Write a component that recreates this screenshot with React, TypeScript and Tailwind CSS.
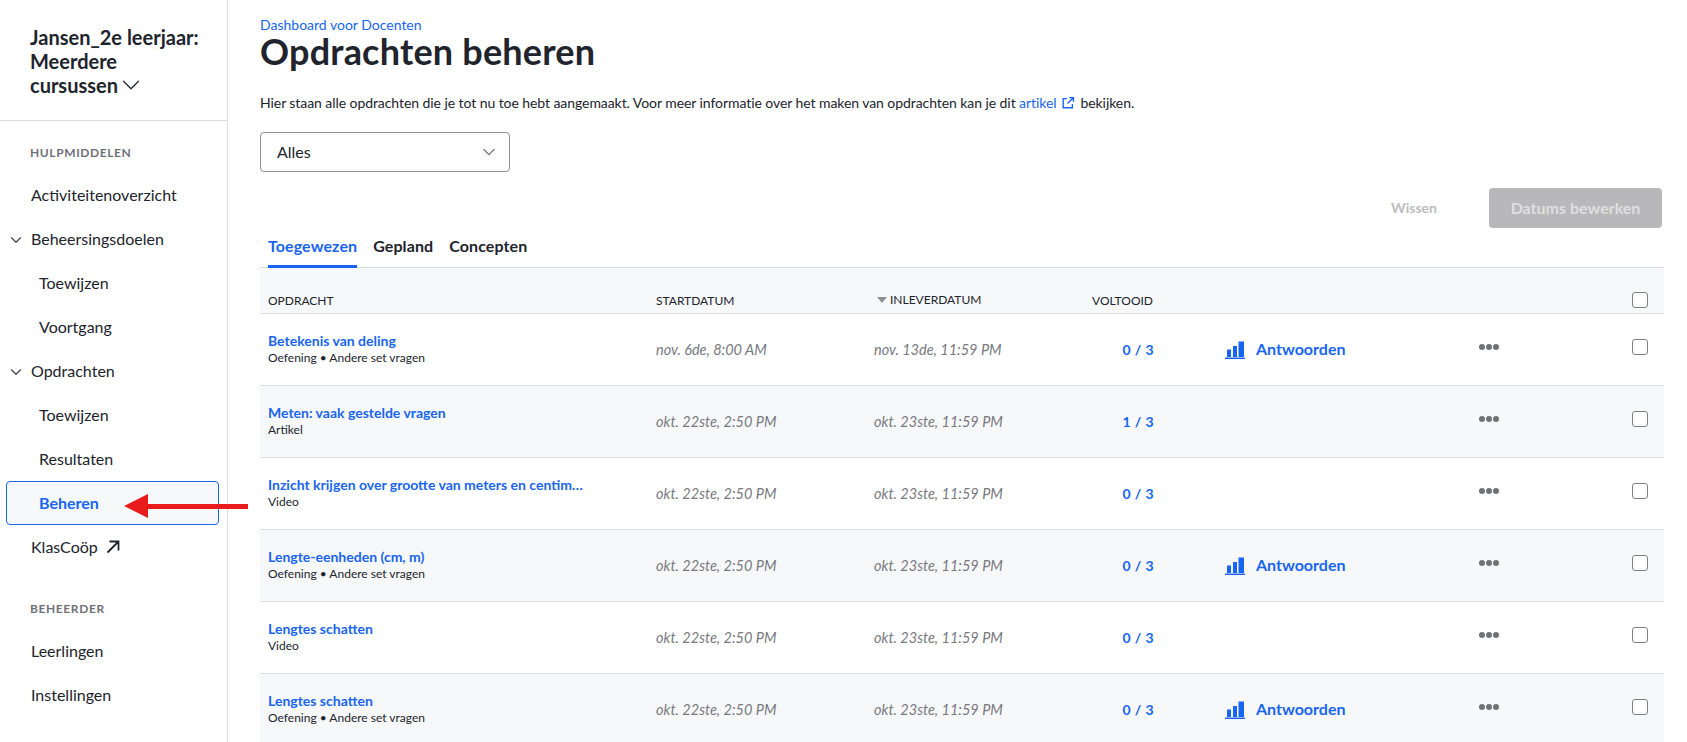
import React from "react";

const Chev = ({ className = "", sw = 1.5 }: { className?: string; sw?: number }) => (
  <svg viewBox="0 0 16 16" className={className} fill="none" stroke="currentColor" strokeWidth={sw} strokeLinecap="round" strokeLinejoin="round">
    <path d="M2 5l6 6 6-6" />
  </svg>
);

const NavItem = ({ label, child, chevron }: { label: string; child?: boolean; chevron?: boolean }) => (
  <div className={`h-[44px] flex items-center text-[16px] text-[#21242c] relative ${child ? "pl-[39px]" : "pl-[31px]"}`}>
    {chevron && <Chev className="absolute left-[10px] top-[17px] w-[12px] h-[12px] text-[#3b3e45]" />}
    {label}
  </div>
);

const Section = ({ label }: { label: string }) => (
  <div className="pl-[30px] text-[12px] leading-[16px] font-bold tracking-[0.6px] text-[#6f7177]">{label}</div>
);

type Row = { title: string; sub: string; start: string; end: string; done: string; answers?: boolean };
const rows: Row[] = [
  { title: "Betekenis van deling", sub: "Oefening • Andere set vragen", start: "nov. 6de, 8:00 AM", end: "nov. 13de, 11:59 PM", done: "0 / 3", answers: true },
  { title: "Meten: vaak gestelde vragen", sub: "Artikel", start: "okt. 22ste, 2:50 PM", end: "okt. 23ste, 11:59 PM", done: "1 / 3" },
  { title: "Inzicht krijgen over grootte van meters en centimeters", sub: "Video", start: "okt. 22ste, 2:50 PM", end: "okt. 23ste, 11:59 PM", done: "0 / 3" },
  { title: "Lengte-eenheden (cm, m)", sub: "Oefening • Andere set vragen", start: "okt. 22ste, 2:50 PM", end: "okt. 23ste, 11:59 PM", done: "0 / 3", answers: true },
  { title: "Lengtes schatten", sub: "Video", start: "okt. 22ste, 2:50 PM", end: "okt. 23ste, 11:59 PM", done: "0 / 3" },
  { title: "Lengtes schatten", sub: "Oefening • Andere set vragen", start: "okt. 22ste, 2:50 PM", end: "okt. 23ste, 11:59 PM", done: "0 / 3", answers: true },
];

const cols = "grid grid-cols-[396px_218px_160px_120px_71px_254px_153px_16px_16px]";

const Check = () => <div className="w-[16px] h-[16px] rounded-[3px] border border-[#7f8187] bg-white" />;

const BarsIcon = () => (
  <svg viewBox="0 0 20 18" className="w-[20px] h-[18px] text-[#1865f2]" fill="currentColor">
    <rect x="2" y="8.5" width="4" height="7.5" />
    <rect x="8" y="5" width="4" height="11" />
    <rect x="13.5" y="0.5" width="5.5" height="15.5" />
    <rect x="0" y="16.5" width="20" height="1.5" />
  </svg>
);

export default function App() {
  return (
    <div className="h-[742px] w-full overflow-hidden bg-white flex font-['Lato','Liberation_Sans',sans-serif] text-[#21242c]">
      <aside className="w-[228px] shrink-0 border-r border-[#dcdcdd] flex flex-col">
        <div className="h-[121px] border-b border-[#dcdcdd] pt-[25px] pl-[30px] pr-[20px] text-[20px] leading-[24px] font-bold">
          <div>Jansen_2e leerjaar:</div>
          <div>Meerdere</div>
          <div className="flex items-center">
            cursussen
            <Chev className="w-[20px] h-[20px] ml-[3px] text-[#21242c]" sw={1} />
          </div>
        </div>
        <div className="pt-[24px]">
          <Section label="HULPMIDDELEN" />
          <div className="mt-[12px]">
            <NavItem label="Activiteitenoverzicht" />
            <NavItem label="Beheersingsdoelen" chevron />
            <NavItem label="Toewijzen" child />
            <NavItem label="Voortgang" child />
            <NavItem label="Opdrachten" chevron />
            <NavItem label="Toewijzen" child />
            <NavItem label="Resultaten" child />
            <div className="mx-[6px] w-[213px] h-[44px] rounded-[4px] border border-[#1865f2] bg-[#f7f8fa] flex items-center pl-[32px] text-[16px] font-bold text-[#1865f2]">
              Beheren
            </div>
            <div className="h-[44px] flex items-center pl-[31px] text-[16px] gap-[8px]">
              KlasCoöp
              <svg viewBox="0 0 14 14" className="w-[14px] h-[14px]" fill="none" stroke="#21242c" strokeWidth="1.8">
                <path d="M1.5 12.5L12 2M3.5 1.5h9v9" />
              </svg>
            </div>
          </div>
          <div className="mt-[32px]"><Section label="BEHEERDER" /></div>
          <div className="mt-[12px]">
            <NavItem label="Leerlingen" />
            <NavItem label="Instellingen" />
          </div>
        </div>
      </aside>

      <main className="flex-1 min-w-0 pl-[32px] pr-[25px] relative">
        <div className="pt-[17px] text-[14px] leading-[16px] text-[#1865f2]">Dashboard voor Docenten</div>
        <h1 className="text-[36px] leading-[36px] font-bold tracking-[0.2px]">Opdrachten beheren</h1>
        <p className="mt-[24px] text-[14px] leading-[20px] text-[#21242c] flex items-center tracking-[-0.07px]">
          Hier staan alle opdrachten die je tot nu toe hebt aangemaakt. Voor meer informatie over het maken van opdrachten kan je dit&nbsp;
          <span className="text-[#1865f2]">artikel</span>
          <svg viewBox="0 0 16 16" className="w-[14px] h-[14px] mx-[5px] text-[#1865f2]" fill="none" stroke="currentColor" strokeWidth="1.6">
            <path d="M7 3H2.5v10.5H13V9M9.5 1.8h4.7v4.7M14 2L7.5 8.5" />
          </svg>
          bekijken.
        </p>
        <div className="mt-[19px] w-[250px] h-[40px] rounded-[4px] border border-[#8e8f93] flex items-center justify-between pl-[16px] pr-[13px] text-[16px]">
          Alles
          <Chev className="w-[14px] h-[14px] text-[#6f7177]" />
        </div>
        <div className="mt-[16px] h-[40px] flex items-center justify-end">
          <span className="text-[14px] font-bold text-[#bcbcbe] mr-[52px] -translate-y-[1px]">Wissen</span>
          <div className="w-[173px] h-[40px] rounded-[4px] bg-[#b8b8ba] flex items-center justify-center text-[16px] font-bold text-[#dfdfe0]">
            Datums bewerken
          </div>
        </div>
        <div className="mt-[6px] h-[34px] w-[1404px] border-b border-[#dcdcdd] flex pl-[8px] gap-[16px] text-[16px] font-bold tracking-[0.1px]">
          <div className="h-[34px] border-b-[3px] border-[#1865f2] text-[#1865f2] leading-[24px]">Toegewezen</div>
          <div className="leading-[24px]">Gepland</div>
          <div className="leading-[24px]">Concepten</div>
        </div>
        <div className="w-[1404px]">
          <div className={`${cols} h-[46px] bg-[#f7f8fa] border-b border-[#dcdcdd] items-end pb-[4px] text-[12px] leading-[16px]`}>
            <div className="pl-[8px]">OPDRACHT</div>
            <div>STARTDATUM</div>
            <div className="flex items-center pl-[3px] -translate-y-[1px]">
              <span className="w-0 h-0 mr-[3px] border-x-[5.5px] border-x-transparent border-t-[6px] border-t-[#8e8f93]" />
              INLEVERDATUM
            </div>
            <div className="text-right pr-[1px]">VOLTOOID</div>
            <div />
            <div />
            <div />
            <div className="-translate-y-[1px]"><Check /></div>
            <div />
          </div>
          {rows.map((r, i) => (
            <div key={i} className={`${cols} h-[72px] border-b border-[#dcdcdd] items-center ${i % 2 ? "bg-[#f7f8fa]" : "bg-white"}`}>
              <div className="pl-[8px] pb-[2px]">
                <div className="w-[320px] truncate text-[14px] leading-[18px] font-bold text-[#1865f2]">{r.title}</div>
                <div className="text-[12px] leading-[16px]">{r.sub}</div>
              </div>
              <div className="text-[14.5px] italic text-[#77797f]">{r.start}</div>
              <div className="text-[14.5px] italic text-[#77797f] whitespace-nowrap">{r.end}</div>
              <div className="text-right text-[14px] font-bold text-[#1865f2] tracking-[0.4px]">{r.done}</div>
              <div />
              <div>
                {r.answers && (
                  <div className="flex items-center gap-[11px] text-[16px] font-bold text-[#1865f2]">
                    <BarsIcon />
                    <span className="-translate-y-[1px]">Antwoorden</span>
                  </div>
                )}
              </div>
              <div className="flex gap-[1px] -translate-y-[3px]">
                {[0, 1, 2].map((d) => (
                  <span key={d} className="w-[6px] h-[6px] rounded-full bg-[#6f7177]" />
                ))}
              </div>
              <div className="-translate-y-[3px]"><Check /></div>
              <div />
            </div>
          ))}
        </div>
        <div className="absolute left-[-104px] top-[494px] flex items-center">
          <span className="w-0 h-0 border-y-[12px] border-y-transparent border-r-[24px] border-r-[#e81c1c]" />
          <span className="w-[100px] h-[5px] bg-[#e81c1c]" />
        </div>
      </main>
    </div>
  );
}
